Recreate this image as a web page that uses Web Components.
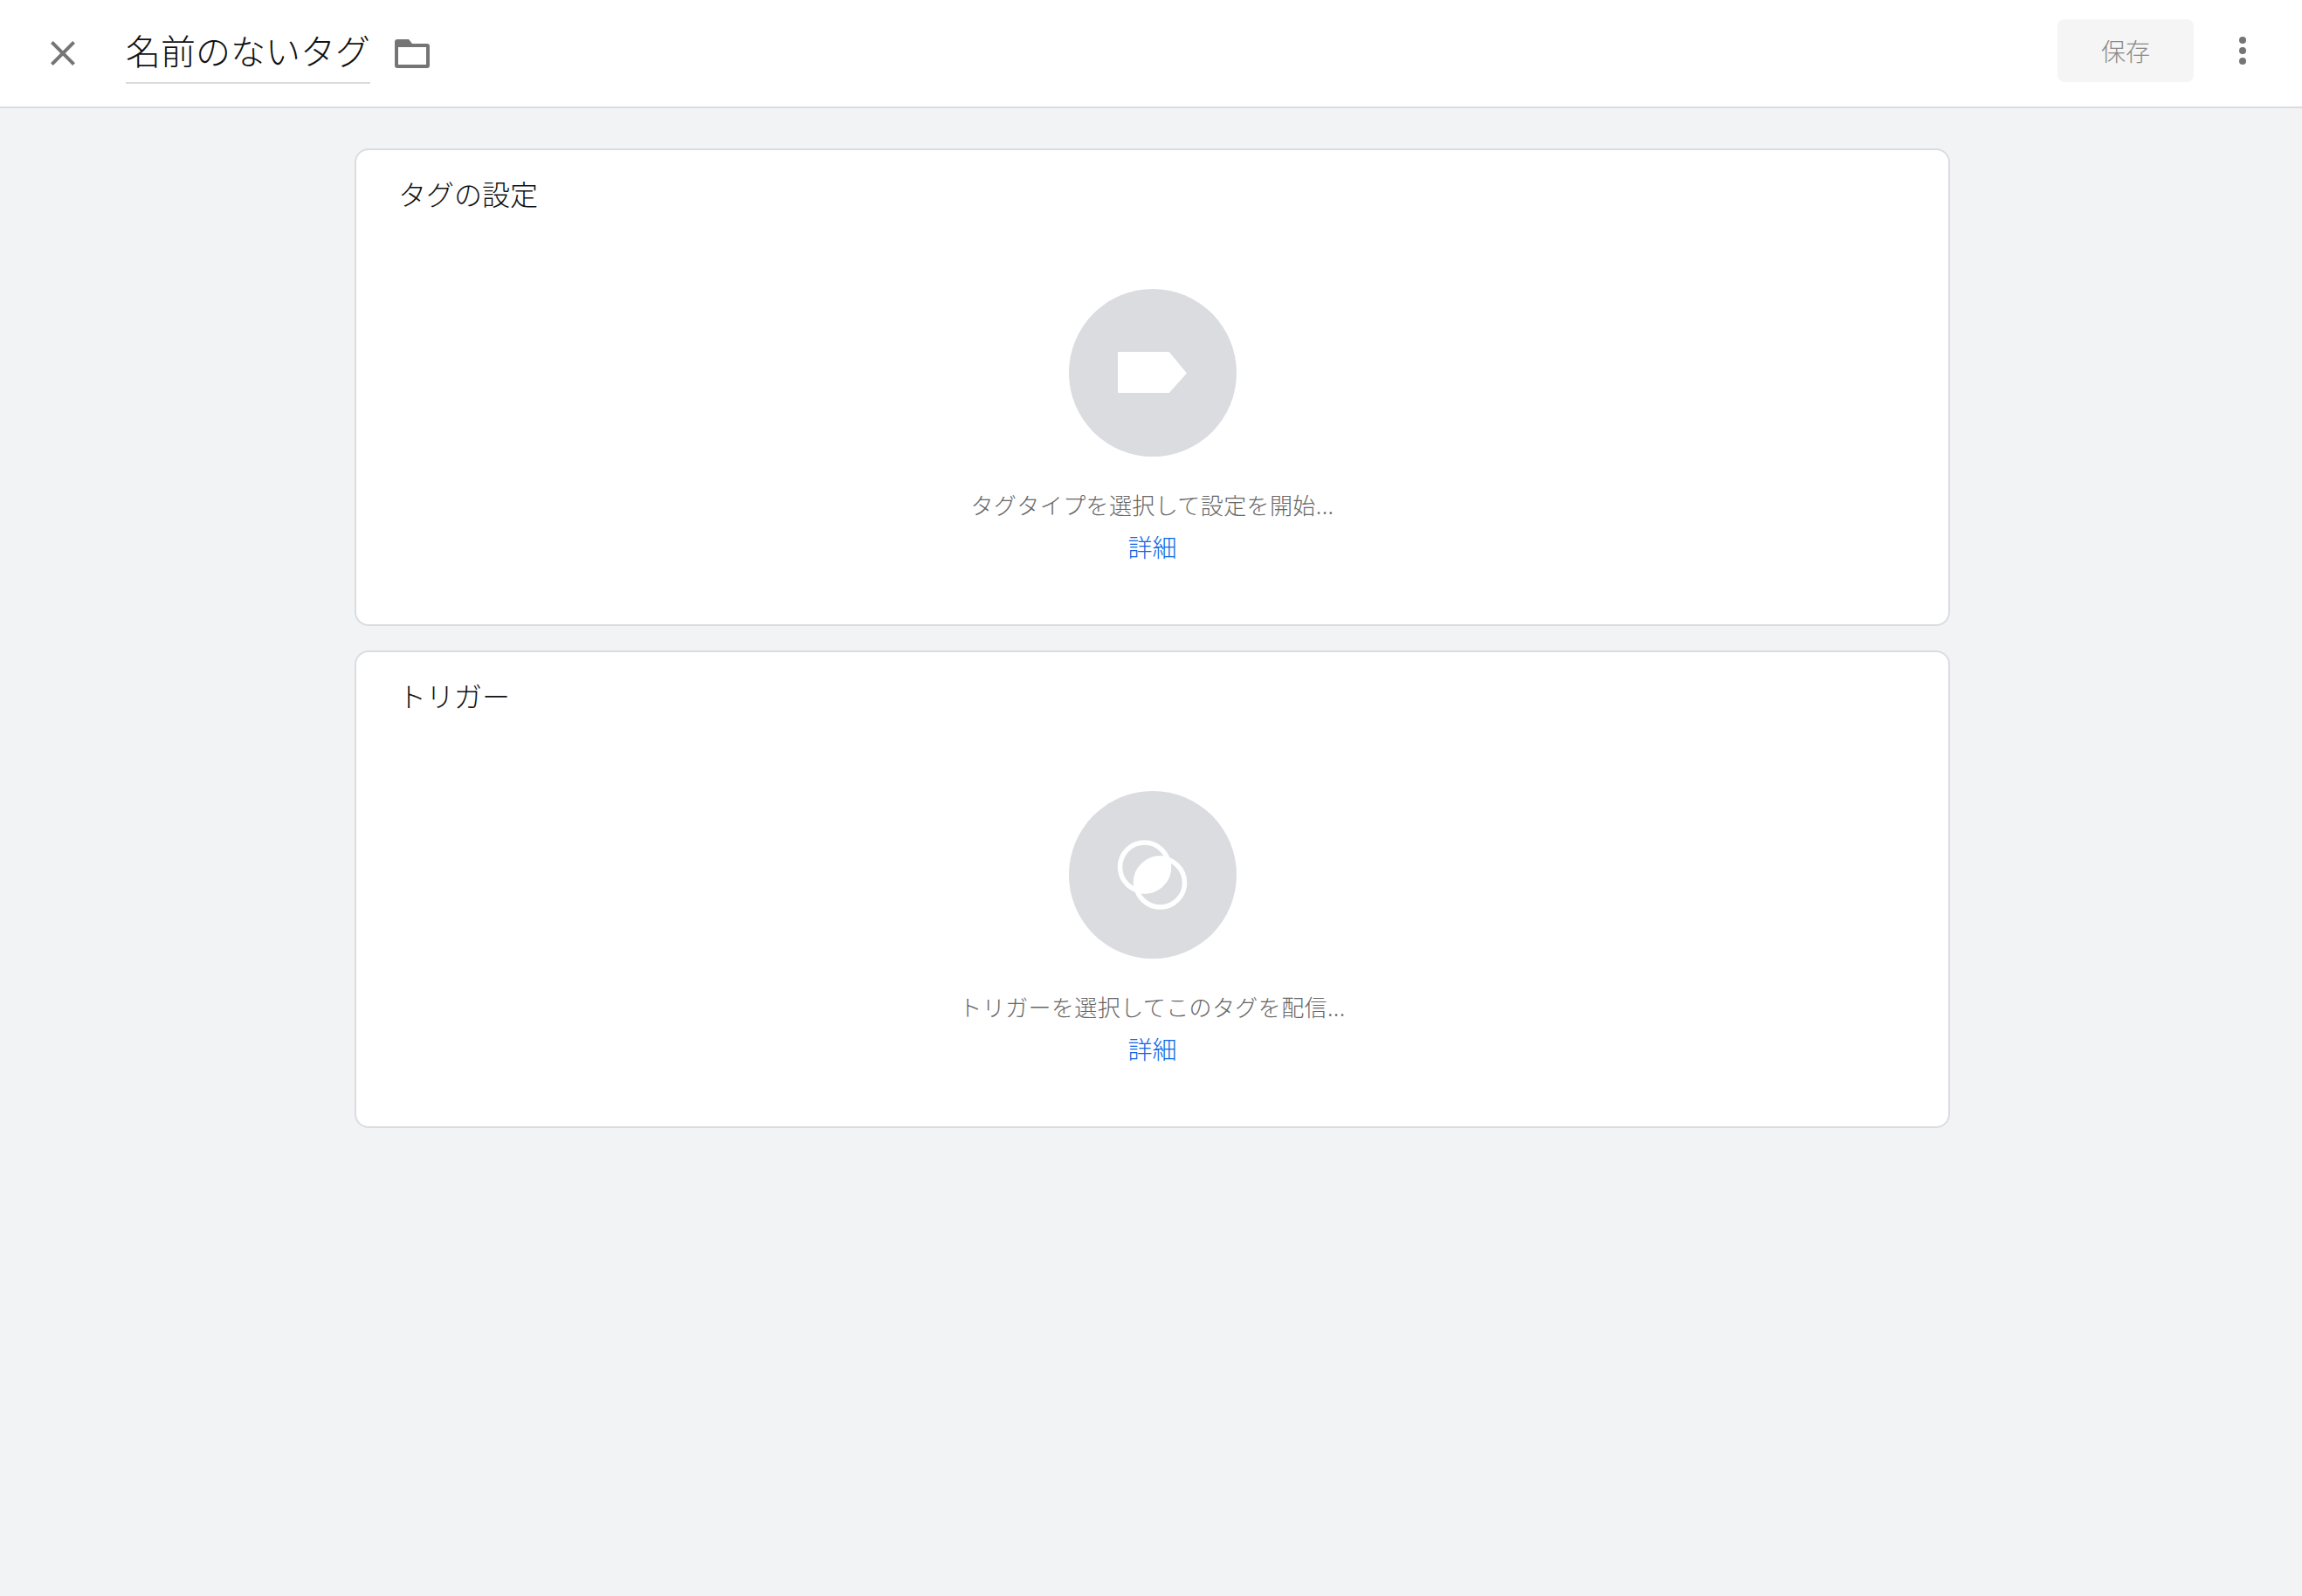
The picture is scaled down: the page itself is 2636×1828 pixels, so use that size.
<!DOCTYPE html>
<html lang="ja">
<head>
<meta charset="utf-8">
<title>名前のないタグ</title>
<style>
  html, body { margin: 0; height: 100%; }
  body {
    background: #f1f3f4;
    font-family: "Noto Sans CJK JP", "Liberation Sans", sans-serif;
    font-weight: 300;
    color: #111;
  }
</style>
</head>
<body>
<tag-editor>
  <editor-header slot="header" name="名前のないタグ" action="保存"></editor-header>
  <setup-card heading="タグの設定" hint="タグタイプを選択して設定を開始..." link="詳細">
    <svg viewBox="0 0 192 192" width="192" height="192"><path fill="#fff" d="M57 72h57a1.500 1.500 0 0 1 1.200.500L135 96.500 115.200 118.500a1.500 1.500 0 0 1-1.200.500H57a1 1 0 0 1-1-1V73a1 1 0 0 1 1-1z"/></svg>
  </setup-card>
  <setup-card heading="トリガー" hint="トリガーを選択してこのタグを配信..." link="詳細">
    <svg viewBox="0 0 192 192" width="192" height="192"><g transform="translate(0 1.500)"><g fill="none" stroke="#fff" stroke-width="5.500"><circle cx="86.500" cy="85.500" r="28"/><circle cx="104.500" cy="103.500" r="28"/></g><path fill="#fff" d="M115.100 74.900A30.500 30.500 0 0 1 75.900 114.100 30.500 30.500 0 0 1 115.100 74.900z"/></g></svg>
  </setup-card>
</tag-editor>

<script>
class TagEditor extends HTMLElement {
  constructor() {
    super();
    this.attachShadow({ mode: "open" });
    this.shadowRoot.innerHTML = `
      <style>
        :host { display: block; }
        main {
          display: flex;
          flex-direction: column;
          gap: 28px;
          padding: 46px 403px 0 406px;
        }
      </style>
      <slot name="header"></slot>
      <main><slot></slot></main>
    `;
  }
}

class EditorHeader extends HTMLElement {
  constructor() {
    super();
    this.attachShadow({ mode: "open" });
    this.shadowRoot.innerHTML = `
      <style>
        :host {
          display: flex;
          align-items: center;
          height: 122px;
          background: #fff;
          border-bottom: 2px solid #dadce0;
          padding-inline: 48px 62px;
        }
        svg { display: block; fill: #757575; flex: none; }
        #close { margin-bottom: 1px; }
        #name {
          margin-left: 48px;
          margin-bottom: 4px;
          height: 74px;
          line-height: 70px;
          box-sizing: border-box;
          font-size: 40px;
          border-bottom: 2px solid #dadce0;
          color: #111;
        }
        #folder { margin-left: 28px; margin-top: 1px; }
        #save {
          margin-left: auto;
          margin-bottom: 6px;
          width: 156px;
          height: 72px;
          display: flex;
          align-items: center;
          justify-content: center;
          background: #f5f5f5;
          border-radius: 8px;
          font-size: 28px;
          color: #8a8a8a;
        }
        #more { margin-left: 50px; margin-bottom: 6px; }
      </style>
      <svg id="close" width="48" height="48" viewBox="0 0 24 24"><path d="M19 6.410L17.590 5 12 10.590 6.410 5 5 6.410 10.590 12 5 17.590 6.410 19 12 13.410 17.590 19 19 17.590 13.410 12z"/></svg>
      <span id="name"></span>
      <svg id="folder" width="40" height="33" viewBox="0 0 40 33"><path fill-rule="evenodd" d="M3 0h13l4 5h17a3 3 0 0 1 3 3v22a3 3 0 0 1-3 3H3a3 3 0 0 1-3-3V3a3 3 0 0 1 3-3zm1 9v20h32V9z"/></svg>
      <span id="save"></span>
      <svg id="more" width="12" height="34" viewBox="0 0 12 34"><circle cx="6" cy="5" r="4"/><circle cx="6" cy="17" r="4"/><circle cx="6" cy="29" r="4"/></svg>
    `;
  }

  connectedCallback() {
    this.shadowRoot.querySelector("#name").textContent = this.getAttribute("name") || "";
    this.shadowRoot.querySelector("#save").textContent = this.getAttribute("action") || "";
  }
}

class SetupCard extends HTMLElement {
  constructor() {
    super();
    this.attachShadow({ mode: "open" });
    this.shadowRoot.innerHTML = `
      <style>
        :host {
          display: block;
          box-sizing: border-box;
          height: 547px;
          padding: 27px 48px 0;
          background: #fff;
          border: 2px solid #dadce0;
          border-radius: 16px;
        }
        h2 {
          margin: 0;
          font-size: 32px;
          font-weight: inherit;
          line-height: 44px;
          color: #111;
        }
        #empty {
          display: flex;
          flex-direction: column;
          align-items: center;
          margin-top: 88px;
        }
        #icon {
          width: 192px;
          height: 192px;
          border-radius: 50%;
          background: #dadce0;
        }
        ::slotted(svg) { display: block; }
        #hint {
          margin-top: 35px;
          font-size: 26px;
          letter-spacing: 0.4px;
          line-height: 40px;
          color: #666;
        }
        a {
          margin-top: 8px;
          font-size: 28px;
          line-height: 40px;
          color: #0b66e4;
          text-decoration: none;
        }
      </style>
      <h2></h2>
      <div id="empty">
        <div id="icon"><slot></slot></div>
        <div id="hint"></div>
        <a href="#"></a>
      </div>
    `;
  }

  connectedCallback() {
    this.shadowRoot.querySelector("h2").textContent = this.getAttribute("heading") || "";
    this.shadowRoot.querySelector("#hint").textContent = this.getAttribute("hint") || "";
    this.shadowRoot.querySelector("a").textContent = this.getAttribute("link") || "";
  }
}

customElements.define("tag-editor", TagEditor);
customElements.define("editor-header", EditorHeader);
customElements.define("setup-card", SetupCard);
</script>
</body>
</html>
